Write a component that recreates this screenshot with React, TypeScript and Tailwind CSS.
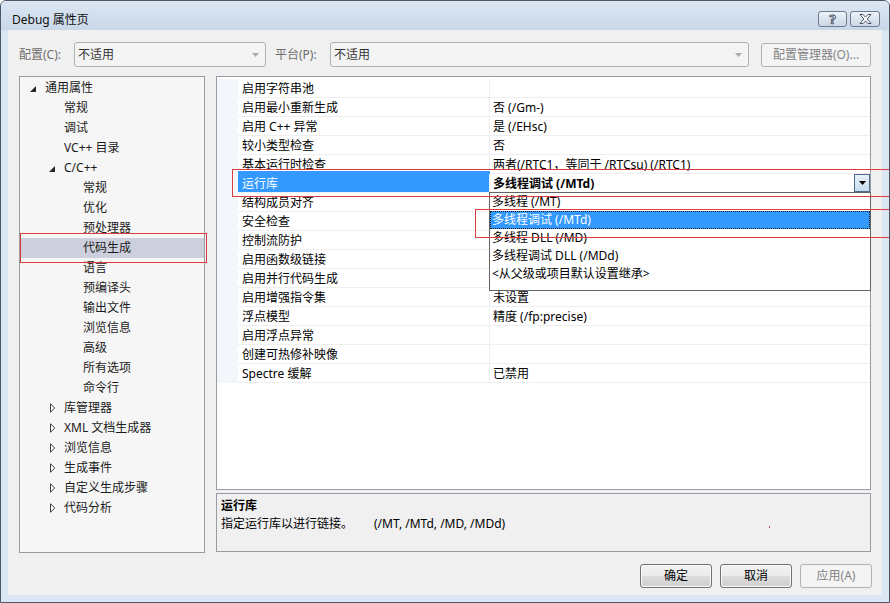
import React from "react";

const FONT = "font-['Noto_Sans','Noto_Sans_CJK_SC',sans-serif]";

type TreeItem = { t: string; lv: 0 | 1 | 2; a: "open" | "closed" | null; sel?: boolean };

const tree: TreeItem[] = [
  { t: "通用属性", lv: 0, a: "open" },
  { t: "常规", lv: 1, a: null },
  { t: "调试", lv: 1, a: null },
  { t: "VC++ 目录", lv: 1, a: null },
  { t: "C/C++", lv: 1, a: "open" },
  { t: "常规", lv: 2, a: null },
  { t: "优化", lv: 2, a: null },
  { t: "预处理器", lv: 2, a: null },
  { t: "代码生成", lv: 2, a: null, sel: true },
  { t: "语言", lv: 2, a: null },
  { t: "预编译头", lv: 2, a: null },
  { t: "输出文件", lv: 2, a: null },
  { t: "浏览信息", lv: 2, a: null },
  { t: "高级", lv: 2, a: null },
  { t: "所有选项", lv: 2, a: null },
  { t: "命令行", lv: 2, a: null },
  { t: "库管理器", lv: 1, a: "closed" },
  { t: "XML 文档生成器", lv: 1, a: "closed" },
  { t: "浏览信息", lv: 1, a: "closed" },
  { t: "生成事件", lv: 1, a: "closed" },
  { t: "自定义生成步骤", lv: 1, a: "closed" },
  { t: "代码分析", lv: 1, a: "closed" },
];

const indent = ["pl-[9px]", "pl-[28px]", "pl-[47px]"];

const props: [string, string][] = [
  ["启用字符串池", ""],
  ["启用最小重新生成", "否 (/Gm-)"],
  ["启用 C++ 异常", "是 (/EHsc)"],
  ["较小类型检查", "否"],
  ["基本运行时检查", "两者(/RTC1，等同于 /RTCsu) (/RTC1)"],
  ["运行库", "多线程调试 (/MTd)"],
  ["结构成员对齐", ""],
  ["安全检查", ""],
  ["控制流防护", ""],
  ["启用函数级链接", ""],
  ["启用并行代码生成", ""],
  ["启用增强指令集", "未设置"],
  ["浮点模型", "精度 (/fp:precise)"],
  ["启用浮点异常", ""],
  ["创建可热修补映像", ""],
  ["Spectre 缓解", "已禁用"],
];

const options = [
  "多线程 (/MT)",
  "多线程调试 (/MTd)",
  "多线程 DLL (/MD)",
  "多线程调试 DLL (/MDd)",
  "<从父级或项目默认设置继承>",
];

function Combo({ w }: { w: string }) {
  return (
    <div className={`${w} h-[25px] border border-[#adb2b5] rounded-[3px] bg-[#f4f4f4] flex items-center pl-[3px] pr-[6px]`}>
      <span className="text-[#333] leading-[18px]">不适用</span>
      <svg className="ml-auto" width="7" height="4" viewBox="0 0 7 4">
        <path d="M0 0h7L3.5 4z" fill="#a9a9a9" />
      </svg>
    </div>
  );
}

function Btn({ label, disabled }: { label: string; disabled?: boolean }) {
  if (disabled)
    return (
      <div className="w-[72px] h-[24px] border border-[#adb2b5] rounded-[3px] bg-[#f4f4f4] flex items-center justify-center text-[#838383]">
        {label}
      </div>
    );
  return (
    <div className="w-[72px] h-[24px] border border-[#707070] rounded-[3px] bg-[linear-gradient(#f2f2f2_0%,#ebebeb_50%,#dddddd_50%,#cfcfcf_100%)] shadow-[inset_0_0_0_1px_#fbfbfb] flex items-center justify-center text-black">
      {label}
    </div>
  );
}

export default function App() {
  return (
    <div className={`relative w-[890px] h-[603px] overflow-hidden bg-[#dbe6f3] border border-[#4d5866] rounded-t-[6px] flex flex-col text-[12px] text-black ${FONT}`}>
      {/* Title bar */}
      <div className="h-[29px] flex items-start pt-[10px] pl-[11px] pr-[9px] bg-[linear-gradient(#dbe6f2,#c9d8e8)]">
        <span className="leading-[16px] text-[#111] mt-[1px]">Debug 属性页</span>
        <div className="ml-auto flex gap-[3px]">
          <div className="w-[29px] h-[16px] border border-[#6c7b8e] rounded-[3px] bg-[linear-gradient(#eef3f9,#c9d7e7)] flex items-center justify-center">
            <span className="text-white text-[13px] font-bold leading-[14px] [-webkit-text-stroke:0.8px_#34414f]">?</span>
          </div>
          <div className="w-[30px] h-[16px] border border-[#6c7b8e] rounded-[3px] bg-[linear-gradient(#eef3f9,#c9d7e7)] flex items-center justify-center">
            <svg width="13" height="10" viewBox="0 0 13 10">
              <path
                d="M1 0.5h3l2.5 2.6 2.5-2.6h3L8.2 5l3.8 4.5h-3L6.5 6.9 4 9.5H1L4.8 5z"
                fill="#fff"
                stroke="#34414f"
                strokeWidth="0.9"
              />
            </svg>
          </div>
        </div>
      </div>

      {/* Client area */}
      <div className="flex-1 mx-[7px] mb-[7px] bg-[#f0f0f0] flex flex-col px-[11px] pt-[12px]">
        {/* toolbar */}
        <div className="flex items-center h-[25px]">
          <span className="w-[55px] text-[#6d6d6d]">配置(C):</span>
          <Combo w="w-[192px]" />
          <span className="ml-[9px] w-[55px] text-[#6d6d6d]">平台(P):</span>
          <Combo w="w-[419px]" />
          <div className="ml-[12px] w-[110px] h-[24px] border border-[#adb2b5] rounded-[3px] bg-[#f4f4f4] flex items-center justify-center text-[#838383]">
            配置管理器(O)...
          </div>
        </div>

        {/* main */}
        <div className="mt-[9px] flex gap-[11px] h-[477px]">
          {/* tree */}
          <div className="w-[186px] border border-[#9a9ca4] bg-[#f6f6f6] flex flex-col pt-[1px]">
            {tree.map((it, i) => (
              <div
                key={i}
                className={`h-[20px] flex items-center ml-[1px] ${indent[it.lv]} ${it.sel ? "bg-[#cdd0dc]" : ""}`}
              >
                <span className="w-[15px] flex items-center">
                  {it.a === "open" && (
                    <svg width="6" height="6" viewBox="0 0 6 6" className="mt-[1px]">
                      <path d="M6 0V6H0z" fill="#262626" />
                    </svg>
                  )}
                  {it.a === "closed" && (
                    <svg width="6" height="10" viewBox="0 0 6 10" className="ml-[1px]">
                      <path d="M0.5 0.8L4.8 5 0.5 9.2z" fill="#fff" stroke="#3a3a3a" strokeWidth="1" />
                    </svg>
                  )}
                </span>
                <span className="leading-[18px] text-[#1b1b1b]">{it.t}</span>
              </div>
            ))}
          </div>

          {/* right column */}
          <div className="flex-1 flex flex-col gap-[3px]">
            {/* grid */}
            <div className="relative h-[414px] border border-[#9a9ca4] bg-white flex flex-col pt-[2px]">
              {props.map(([n, v], i) => {
                const sel = i === 5;
                return (
                  <div key={i} className="flex h-[19px]">
                    <div className="w-[21px] bg-[#f3f6fb]" />
                    <div className="flex flex-1 border-b border-[#efefef]">
                      <div
                        className={`w-[252px] border-r border-[#efefef] pl-[4px] leading-[19px] whitespace-nowrap ${
                          sel ? "bg-[#3399ff] text-white shadow-[0_-3px_0_#3399ff]" : ""
                        }`}
                      >
                        {n}
                      </div>
                      <div className={`flex-1 flex items-center pl-[3px] leading-[18px] whitespace-nowrap ${sel ? "font-bold" : ""}`}>
                        <span className="mt-[1px]">{v}</span>
                        {sel && (
                          <div className="ml-auto w-[16px] h-[18px] border border-[#4f6b88] bg-[linear-gradient(#e8f1fa,#c6dcf0)] flex items-center justify-center">
                            <svg width="7" height="4" viewBox="0 0 7 4">
                              <path d="M0 0h7L3.5 4z" fill="#000" />
                            </svg>
                          </div>
                        )}
                      </div>
                    </div>
                  </div>
                );
              })}

              {/* dropdown list */}
              <div className="absolute left-[272px] top-[115px] w-[382px] h-[99px] border border-[#646464] bg-white flex flex-col">
                {options.map((o, i) => (
                  <div
                    key={i}
                    className={`h-[18px] flex items-center pl-[2px] leading-[18px] whitespace-nowrap ${
                      i === 1 ? "bg-[#3399ff] text-white outline outline-1 outline-dotted outline-[#1a1a1a] -outline-offset-1" : "text-black"
                    }`}
                  >
                    {o}
                  </div>
                ))}
              </div>
            </div>

            {/* description */}
            <div className="relative h-[59px] border border-[#9a9ca4] bg-[#f0f0f0] pl-[4px] pt-[3px]">
              <div className="leading-[18px] font-bold">运行库</div>
              <div className="leading-[18px] whitespace-nowrap">
                <span className="inline-block w-[153px]">指定运行库以进行链接。</span>
                <span>(/MT, /MTd, /MD, /MDd)</span>
              </div>
              <span className="absolute left-[552px] top-[32px] w-[1px] h-[2px] bg-[#d44]" />
            </div>
          </div>
        </div>

        {/* buttons */}
        <div className="mt-[11px] flex justify-end gap-[8px] -mr-[1px]">
          <Btn label="确定" />
          <Btn label="取消" />
          <Btn label="应用(A)" disabled />
        </div>
      </div>

      {/* red annotation rectangles */}
      <div className="absolute left-[19px] top-[232px] w-[187px] h-[30px] border border-[#dc3c3c]" />
      <div className="absolute left-[231px] top-[168px] w-[680px] h-[28px] border border-[#dc3c3c]" />
      <div className="absolute left-[474px] top-[208px] w-[440px] h-[29px] border border-[#dc3c3c]" />
    </div>
  );
}
